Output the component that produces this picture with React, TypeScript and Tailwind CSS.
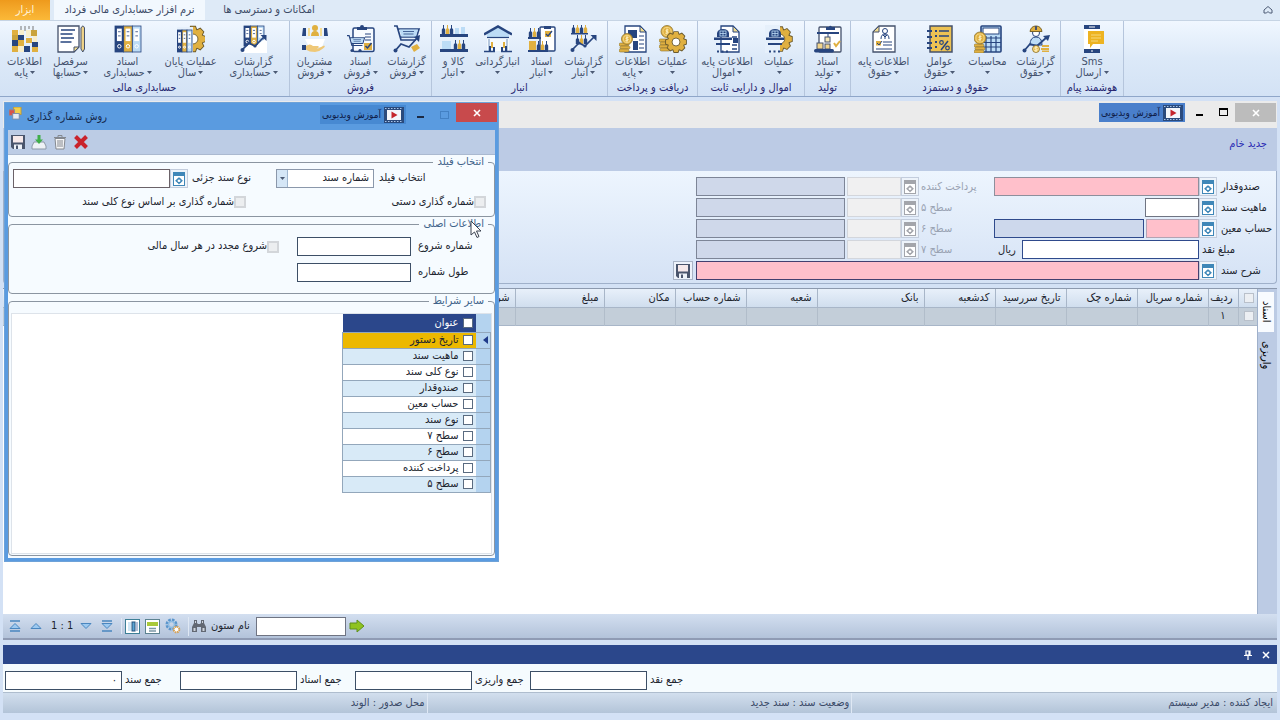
import type { ReactNode } from 'react';
import { clsx } from 'clsx';

const NAVY = '#27457f';
const GOLD = '#e0b040';
const SKY = '#bcdcf6';

// ---------------------------------------------------------------- ribbon icons

function Icon({ children }: { children: ReactNode }) {
  return (
    <svg viewBox="0 0 28 28" className="size-7 shrink-0" fill="none" aria-hidden>
      {children}
    </svg>
  );
}

// teeth and disc are drawn twice: outlined first, then filled, so only the silhouette keeps its stroke
function Gear({ cx, cy, r, hole = '#fff' }: { cx: number; cy: number; r: number; hole?: string }) {
  return (
    <g>
      {['#6b5a2c', 'none'].map((stroke) => (
        <g key={stroke} fill={GOLD} stroke={stroke} strokeWidth="1.800">
          {[0, 45, 90, 135].map((a) => (
            <path
              key={a}
              d={`M${cx - r * 0.26} ${cy + r * 0.7}L${cx - r * 0.17} ${cy + r * 0.95}H${cx + r * 0.17}L${cx + r * 0.26} ${cy + r * 0.7}V${cy - r * 0.7}L${cx + r * 0.17} ${cy - r * 0.95}H${cx - r * 0.17}L${cx - r * 0.26} ${cy - r * 0.7}z`}
              transform={`rotate(${a} ${cx} ${cy})`}
            />
          ))}
          <circle cx={cx} cy={cy} r={r * 0.74} />
        </g>
      ))}
      <circle cx={cx} cy={cy} r={r * 0.38} fill={hole} stroke="#6b5a2c" strokeWidth=".9" />
    </g>
  );
}

function Binders({ x, y, w, h }: { x: number; y: number; w: number; h: number }) {
  const c = w / 3;
  return (
    <g>
      {[NAVY, GOLD, SKY].map((fill, i) => (
        <g key={fill}>
          <rect x={x + i * c} y={y} width={c} height={h} fill={fill} stroke={NAVY} strokeWidth=".8" />
          <rect x={x + i * c + c * 0.22} y={y + h * 0.1} width={c * 0.56} height={h * 0.48} fill="#fff" />
          <path
            d={`M${x + i * c + c * 0.35} ${y + h * 0.22}h${c * 0.3}M${x + i * c + c * 0.35} ${y + h * 0.38}h${c * 0.3}`}
            stroke={NAVY}
            strokeWidth=".8"
          />
          <circle cx={x + i * c + c / 2} cy={y + h * 0.78} r={c * 0.2} stroke="#fff" strokeWidth="1" />
        </g>
      ))}
    </g>
  );
}

function Trend() {
  return (
    <g>
      <path d="M2 25l7-7 6 3L25 11" stroke={NAVY} strokeWidth="1.700" />
      <path d="M20.500 10h6v6z" fill={NAVY} />
      <circle cx="2.500" cy="25" r="2" fill={NAVY} />
      <circle cx="9" cy="18" r="1.600" fill={NAVY} />
      <circle cx="15" cy="21" r="1.600" fill={NAVY} />
    </g>
  );
}

function Bottles({ x, y, n = 5 }: { x: number; y: number; n?: number }) {
  return (
    <g>
      {Array.from({ length: n }, (_, i) => (
        <path
          key={i}
          d={`M${x + i * 4 + 1} ${y}h1v3l1.200 1.500v4.500h-3.400v-4.500l1.200-1.500z`}
          fill={i % 2 ? GOLD : NAVY}
        />
      ))}
    </g>
  );
}

function Page({ x = 5, y = 1, w = 20, h = 26 }: { x?: number; y?: number; w?: number; h?: number }) {
  return (
    <g>
      <path d={`M${x} ${y}h${w - 6}l6 6v${h - 6}h${-w}z`} fill="#fff" stroke={NAVY} strokeWidth="1.300" />
      <path d={`M${x + w - 6} ${y}v6h6z`} fill="#f1dc8f" stroke={NAVY} strokeWidth="1" />
    </g>
  );
}

function Clipboard({ x }: { x: number }) {
  return (
    <g>
      <rect x={x} y="3" width={27 - x} height="23.500" rx="1.500" fill="#f7fbff" stroke={NAVY} strokeWidth="1.500" />
      <path d={`M${x + 4} 5V2h3a2 2 0 0 1 4 0h3v3z`} fill={NAVY} />
    </g>
  );
}

function Coins({ x, y, n = 3 }: { x: number; y: number; n?: number }) {
  return (
    <g>
      {Array.from({ length: n }, (_, i) => (
        <rect key={i} x={x + (i % 2)} y={y + i * 3} width="10" height="3" rx="1.500" fill={GOLD} stroke="#8a7434" strokeWidth=".6" />
      ))}
    </g>
  );
}

function Coin({ cx, cy, r }: { cx: number; cy: number; r: number }) {
  return (
    <g>
      <circle cx={cx} cy={cy} r={r} fill={GOLD} stroke="#8a7434" strokeWidth=".8" />
      <circle cx={cx} cy={cy} r={r * 0.68} stroke="#f6dd8d" strokeWidth=".9" />
      <path d={`M${cx + 1.5} ${cy - 1.6}h-2q-1.500 1.500 .5 1.600q2.500 .2 .3 1.700h-2M${cx} ${cy - 3}v6`} stroke="#fff3c4" strokeWidth=".9" />
    </g>
  );
}

function Cart({ x, y, s = 1 }: { x: number; y: number; s?: number }) {
  return (
    <g transform={`translate(${x} ${y}) scale(${s})`}>
      <path d="M0 1h3l4 14h15M4.500 4H25l-2.500 8H6.500" stroke={NAVY} strokeWidth="1.700" />
      <path d="M5.500 4.500H24l-2 7H7.500z" fill={SKY} />
      <path d="M9 6.500h11M9.500 9h10" stroke={NAVY} strokeWidth=".8" />
    </g>
  );
}

function Helmet() {
  return (
    <g>
      <path d="M4 12V8q1-4 6-4t6 4v4z" fill={NAVY} />
      <path d="M1 12.500h18v2.500H1z" fill={NAVY} />
      <rect x="7" y="6" width="6" height="5" stroke={SKY} strokeWidth=".8" />
      <path d="M10 6v5M7 8.500h6" stroke={SKY} strokeWidth=".8" />
      <path d="M3 19h14" stroke={NAVY} strokeWidth="2" />
      <path d="M4 26.500h12" stroke={NAVY} strokeWidth="2" strokeDasharray="2 2.500" />
    </g>
  );
}

const icons: Record<string, ReactNode> = {
  base: (
    <>
      <path d="M10 1v4M14 1v5M18 1v3M22 1v4" stroke="#777" strokeWidth="1" />
      <path d="M1 5h6v5H1zM7 15h6v6H7zM15 13h6v5h-6zM21 21h6v6h-6zM1 21h6v6H1z" fill={GOLD} />
      <path d="M7 10h6v5H7zM1 15h6v6H1zM21 17h6v5h-6zM13 21h6v6h-6z" fill={NAVY} />
      <path d="M20 5h6v6h-6zM1 10h6v5H1z" fill="#c9a33c" />
      <path d="M8 5h5v5H8zM15 5h5v7h-5zM7 21h6v6H7zM22 11h4v6h-4z" fill="#f8eecb" />
    </>
  ),
  ledger: (
    <>
      <path d="M1 1h21v21l-5 5H1z" fill="#fff" stroke="#44516c" strokeWidth="1.300" />
      <path d="M17 27v-5h5z" fill="#f1dc8f" stroke="#44516c" />
      <path d="M4 5h14M3.500 9h12M4 13h13M3.500 17h11" stroke={NAVY} strokeWidth="1.500" />
      <path d="M24 3q2-4 3.500 0v21l-1.700 3-1.800-3z" fill="#eed287" stroke="#44516c" />
    </>
  ),
  binders: <Binders x={1} y={1} w={26} h={26} />,
  yearEnd: (
    <>
      <Gear cx={16} cy={14} r={13} />
      <rect x="-1" y="2" width="17" height="26" fill="#e6f0fb" />
      <Binders x={0} y={5} w={15} h={22} />
    </>
  ),
  accReports: (
    <>
      <Binders x={4} y={1} w={20} h={20} />
      <path d="M2 28l7-9 6 3 12-10v16z" fill="#fff" />
      <Trend />
    </>
  ),
  customers: (
    <>
      <circle cx="14" cy="3" r="3" fill={GOLD} />
      <path d="M10 11q0-5 4-5t4 5z" fill={GOLD} />
      <path d="M2 3h3v8H1zM23 3h3l1 8h-4z" fill={NAVY} />
      <path d="M7 3h2v8H7zM19 3h2v8h-2z" fill="#f4dc94" />
      <path d="M4 14h20l-3 8H8z" fill="#fff" />
      <path d="M5 21q4-3 7 0h5q2 1-1 2.500h-4 5l6-3q2 1-1 3-4 3.500-8 3.500-6 0-9-2.500z" fill="#efc877" />
      <path d="M1 20h4v5H1z" fill={NAVY} />
    </>
  ),
  salesDocs: (
    <>
      <Clipboard x={6} />
      <path d="M18 9h6M18 12h6M18 15h6" stroke={NAVY} />
      <Cart x={0} y={10} s={0.7} />
      <circle cx="5" cy="25.500" r="1.600" fill={NAVY} />
      <circle cx="13" cy="25.500" r="1.600" fill={NAVY} />
      <rect x="17" y="18" width="8" height="7" fill={GOLD} />
      <path d="M18.500 21l2 2 4-5" stroke={NAVY} strokeWidth="1.500" />
    </>
  ),
  salesReports: (
    <>
      <Cart x={1} y={0} s={1} />
      <path d="M2 26l6-7 8 3 9-10" stroke={NAVY} strokeWidth="1.800" />
      <path d="M21 12l6-2-1 7z" fill={NAVY} />
      <circle cx="2.500" cy="25.500" r="2" fill={NAVY} />
      <path d="M18 22l6-3 3 4-6 4z" fill={GOLD} />
    </>
  ),
  goods: (
    <>
      <Bottles x={2} y={0} n={3} />
      <path d="M15 3h4v6h-4zM21 2h4v7h-4z" fill={SKY} />
      <path d="M0 9h28v3H0zM0 24h28v3H0z" fill={NAVY} />
      <rect x="2" y="16" width="9" height="8" fill={SKY} />
      <Bottles x={14} y={15} n={3} />
    </>
  ),
  warehouse: (
    <>
      <path d="M3 12h22v14H3z" fill="#f5fafe" />
      <path d="M3 8l11-6 11 6v4H3z" fill={SKY} />
      <path d="M0 9.500L14 1.500l14 8" stroke={NAVY} strokeWidth="2.400" />
      <path d="M3 12.500h22" stroke={NAVY} strokeWidth="1.200" />
      <path d="M5 14v12M23 14v12" stroke="#9fb7d4" strokeWidth="1.500" />
      <path d="M7 17h2v6H7zM19 17h2v6h-2z" fill={GOLD} />
      <path d="M5 21h2v5H5zM9 22h2v4H9zM17 22h2v4h-2zM21 21h2v5h-2z" fill={NAVY} />
      <path d="M0 26.500h11M17 26.500h11" stroke={NAVY} strokeWidth="1.500" />
    </>
  ),
  stockDocs: (
    <>
      <rect x="12" y="2" width="15" height="24" rx="1" fill="#fff" stroke={NAVY} strokeWidth="1.400" />
      <path d="M16 4V1h7v3z" fill={NAVY} />
      <rect x="17" y="6" width="6" height="6" fill={GOLD} />
      <path d="M18 9l2 2 4-5" stroke={NAVY} strokeWidth="1.300" />
      <Bottles x={1} y={3} n={3} />
      <path d="M0 12h13v2H0zM0 25h20v2H0z" fill={NAVY} />
      <rect x="1" y="16" width="7" height="9" fill={GOLD} />
      <Bottles x={9} y={16} n={3} />
    </>
  ),
  stockReports: (
    <>
      <Bottles x={2} y={-1} n={4} />
      <path d="M1 8h17v1.500H1z" fill={NAVY} />
      <Bottles x={6} y={10} n={3} />
      <Trend />
    </>
  ),
  cashBase: (
    <>
      <Page x={6} w={21} />
      <path d="M9 5h9v8H9zM14 16h5v9h-5z" fill={NAVY} />
      <path d="M20 11h5M20 15h5M20 19h5M20 23h5" stroke={NAVY} strokeWidth="1.200" />
      <Coins x={0} y={18} />
      <Coin cx={8} cy={14} r={5.5} />
    </>
  ),
  cashOps: (
    <>
      <Coins x={0} y={14} n={4} />
      <Coin cx={8} cy={6.5} r={6} />
      <Gear cx={17} cy={17} r={10.500} />
    </>
  ),
  assetBase: (
    <>
      <Page x={8} w={18} />
      <path d="M19 12h5M19 20h5M19 24h5" stroke={NAVY} strokeWidth="1.300" />
      <Helmet />
      <rect x="20" y="13" width="5" height="5" fill={NAVY} />
    </>
  ),
  assetOps: (
    <>
      <Gear cx={15} cy={14} r={12.500} />
      <path d="M0 0h15v28H0z" fill="#e6f0fb" />
      <Helmet />
    </>
  ),
  production: (
    <>
      <rect x="5" y="2" width="22" height="25" rx="1" fill="#fff" stroke="#44516c" strokeWidth="1.300" />
      <path d="M12 5V2h3q1-2.500 3 0h3v3z" fill={NAVY} />
      <path d="M3 8h22" stroke={NAVY} strokeWidth="2" />
      <path d="M14 8v4" stroke={NAVY} />
      <rect x="11" y="12" width="5" height="5" fill="#f7e9b9" stroke="#44516c" />
      <rect x="3" y="18" width="6" height="6" fill="#f1d48c" stroke="#44516c" />
      <rect x="11" y="19" width="5" height="5" fill="#f1d48c" stroke="#44516c" />
      <rect x="0" y="24" width="20" height="3.500" rx="1.700" fill={NAVY} />
      <path d="M20 18l2 3 4-5" stroke={GOLD} strokeWidth="2" />
    </>
  ),
  payrollBase: (
    <>
      <path d="M9 1h16v26H3V7z" fill="#fff" stroke="#44516c" strokeWidth="1.300" />
      <path d="M9 1v6H3z" fill="#f1dc8f" stroke="#44516c" />
      <circle cx="15" cy="6" r="2.500" stroke={NAVY} />
      <path d="M11 14q0-5 4-5t4 5M15 9v5M13 10l2 2 2-2" stroke={NAVY} />
      <rect x="6" y="16" width="5" height="4.500" fill={GOLD} />
      <path d="M7 18l2 2 3-4" stroke={NAVY} />
      <path d="M13 17h9M13 20h9M6 24h16" stroke={NAVY} />
    </>
  ),
  factors: (
    <>
      <rect x="4" y="1" width="22" height="26" fill="#ecc254" stroke="#44516c" strokeWidth="1.500" />
      <path d="M1 6h5M1 12h5M1 18h5M1 23h5" stroke={NAVY} strokeWidth="2" />
      <path d="M9 6h2M9 11h2M9 17h2M9 22h2" stroke={NAVY} strokeWidth="2" />
      <path d="M13 6h10M13 11h10" stroke={NAVY} strokeWidth="1.400" />
      <path d="M15 25l7-9" stroke={NAVY} strokeWidth="1.500" />
      <circle cx="15.500" cy="17.500" r="1.800" stroke={NAVY} strokeWidth="1.200" />
      <circle cx="21.500" cy="23" r="1.800" stroke={NAVY} strokeWidth="1.200" />
    </>
  ),
  calc: (
    <>
      <rect x="7" y="1" width="20" height="26" rx="1" fill={SKY} stroke={NAVY} strokeWidth="1.600" />
      <rect x="9" y="3" width="16" height="6" fill="#fff" stroke={NAVY} />
      <path d="M7 13h20M7 17.500h20M7 22h20M12 11v16M17 11v16M22 11v16" stroke={NAVY} strokeWidth="1.200" />
      <Coins x={0} y={19} />
      <Coin cx={6} cy={13} r={6} />
    </>
  ),
  payrollReports: (
    <>
      <path d="M8 20q0-8 6-8t6 8z" fill={SKY} stroke={NAVY} />
      <circle cx="14" cy="8" r="3.500" fill="#fff" stroke={NAVY} />
      <path d="M8 6.500Q9 1 14 1t6 5.500z" fill={GOLD} stroke="#7a6428" />
      <path d="M13 1h2v4h-2z" fill="#44516c" />
      <path d="M2 26l6-7 7 2 10-9" stroke={NAVY} strokeWidth="1.800" />
      <path d="M21 11l7-1-2 6z" fill={NAVY} />
      <circle cx="2.500" cy="25.500" r="2" fill={NAVY} />
      <Coin cx={14} cy={24} r={3.500} />
      <path d="M20 20h7v2h-7zM19 23h8v2h-8zM20 25.500h7v1.500h-7z" fill={GOLD} />
    </>
  ),
  sms: (
    <>
      <rect x="6" y="0" width="16" height="28" rx="1.500" fill="#fff" />
      <path d="M6 0h16v4H6zM6 24h16v4H6z" fill={NAVY} />
      <path d="M10 6h16v13H15l-3 4v-4h-2z" fill="#edb321" />
      <path d="M13 10h10M13 13h10M13 16h7" stroke="#f8d97e" strokeWidth="1.200" />
      <path d="M11 2h6M13 26h2" stroke="#fff" />
    </>
  ),
};

// ---------------------------------------------------------------- ribbon

type RibbonItem = { icon: string; line1: string; line2?: string; width: string };
type RibbonGroup = { title: string; width: string; items: RibbonItem[] };

const groups: RibbonGroup[] = [
  {
    title: 'حسابداری مالی',
    width: 'w-[290px]',
    items: [
      { icon: 'base', line1: 'اطلاعات', line2: 'پایه', width: 'w-12' },
      { icon: 'ledger', line1: 'سرفصل', line2: 'حسابها', width: 'w-11' },
      { icon: 'binders', line1: 'اسناد', line2: 'حسابداری', width: 'w-[70px]' },
      { icon: 'yearEnd', line1: 'عملیات پایان', line2: 'سال', width: 'w-14' },
      { icon: 'accReports', line1: 'گزارشات', line2: 'حسابداری', width: 'w-[70px]' },
    ],
  },
  {
    title: 'فروش',
    width: 'w-[142px]',
    items: [
      { icon: 'customers', line1: 'مشتریان', line2: 'فروش', width: 'w-12' },
      { icon: 'salesDocs', line1: 'اسناد', line2: 'فروش', width: 'w-11' },
      { icon: 'salesReports', line1: 'گزارشات', line2: 'فروش', width: 'w-12' },
    ],
  },
  {
    title: 'انبار',
    width: 'w-44',
    items: [
      { icon: 'goods', line1: 'کالا و', line2: 'انبار', width: 'w-10' },
      { icon: 'warehouse', line1: 'انبارگردانی', width: 'w-12' },
      { icon: 'stockDocs', line1: 'اسناد', line2: 'انبار', width: 'w-10' },
      { icon: 'stockReports', line1: 'گزارشات', line2: 'انبار', width: 'w-11' },
    ],
  },
  {
    title: 'دریافت و پرداخت',
    width: 'w-[90px]',
    items: [
      { icon: 'cashBase', line1: 'اطلاعات', line2: 'پایه', width: 'w-10' },
      { icon: 'cashOps', line1: 'عملیات', width: 'w-10' },
    ],
  },
  {
    title: 'اموال و دارایی ثابت',
    width: 'w-[107px]',
    items: [
      { icon: 'assetBase', line1: 'اطلاعات پایه', line2: 'اموال', width: 'w-14' },
      { icon: 'assetOps', line1: 'عملیات', width: 'w-12' },
    ],
  },
  {
    title: 'تولید',
    width: 'w-[46px]',
    items: [{ icon: 'production', line1: 'اسناد', line2: 'تولید', width: 'w-11' }],
  },
  {
    title: 'حقوق و دستمزد',
    width: 'w-[210px]',
    items: [
      { icon: 'payrollBase', line1: 'اطلاعات پایه', line2: 'حقوق', width: 'w-16' },
      { icon: 'factors', line1: 'عوامل', line2: 'حقوق', width: 'w-12' },
      { icon: 'calc', line1: 'محاسبات', width: 'w-12' },
      { icon: 'payrollReports', line1: 'گزارشات', line2: 'حقوق', width: 'w-12' },
    ],
  },
  {
    title: 'هوشمند پیام',
    width: 'w-[63px]',
    items: [{ icon: 'sms', line1: 'Sms', line2: 'ارسال', width: 'w-12' }],
  },
];

function Caret() {
  return (
    <svg viewBox="0 0 5 3" className="h-[3px] w-[5px] shrink-0" aria-hidden>
      <path d="M0 0h5L2.500 3z" fill="#4c5a74" />
    </svg>
  );
}

function RibbonButton({ item }: { item: RibbonItem }) {
  return (
    <button className={clsx('flex flex-col items-center whitespace-nowrap', item.width)}>
      <Icon>{icons[item.icon]}</Icon>
      <span className="mt-[3px] block leading-[11px]">{item.line1}</span>
      <span className="flex h-[11px] items-center gap-0.5 leading-[11px]">
        {item.line2 && <span>{item.line2}</span>}
        <Caret />
      </span>
    </button>
  );
}

function Ribbon() {
  return (
    <header>
      <nav className="flex h-5 items-stretch bg-[#deeaf7] text-[#3c4a66]">
        <button className="w-[50px] bg-linear-to-b from-[#ee9a1c] to-[#fbb938] text-[#fff3d8]">ابزار</button>
        <button className="ml-1 w-[151px] bg-[#f2f8fe]">نرم افزار حسابداری مالی فرداد</button>
        <button className="w-[128px]">امکانات و دسترسی ها</button>
        <button aria-label="بستن نوار" className="mr-1 ml-auto w-4">
          <svg viewBox="0 0 10 10" className="mx-auto size-[10px]" fill="none" stroke="#4c5a74">
            <path d="M1 5l4-3.500L9 5v3H6.500L5 6.500 3.500 8H1z" />
          </svg>
        </button>
      </nav>
      <div className="flex h-[77px] border-y border-t-[#c6d4e4] border-b-[#8fa6c9] bg-linear-to-b from-[#f0f7ff] via-[#dce9f8] to-[#d3e2f5] text-[#44516c]">
        {groups.map((g) => (
          <section key={g.title} className={clsx('flex shrink-0 flex-col border-r border-[#b5c5dc] pt-1', g.width)}>
            <div className="flex justify-center">
              {g.items.map((item) => (
                <RibbonButton key={item.icon} item={item} />
              ))}
            </div>
            <h2 className="mt-[3px] text-center leading-[14px] whitespace-nowrap text-[#26266f]">{g.title}</h2>
          </section>
        ))}
      </div>
    </header>
  );
}

// ---------------------------------------------------------------- shared controls

function VideoHelp({ dim }: { dim?: boolean }) {
  return (
    <button
      dir="rtl"
      className={clsx(
        'flex h-[19px] items-center gap-[3px] px-0.5 text-[10px] text-[#10204a]',
        dim ? 'bg-[#4789d2]' : 'bg-[#4a7fcb]',
      )}
    >
      <svg viewBox="0 0 20 16" className="h-4 w-5" aria-hidden>
        <rect width="20" height="16" fill="#2a4a7c" />
        <path d="M1 1.500h18M1 14.500h18" stroke="#a9c4e8" strokeDasharray="1.500 1.500" />
        <rect x="3" y="3" width="14" height="10" fill="#f3f6fb" />
        <path d="M7.500 4.500l6 3.500-6 3.500z" fill="#c4252c" />
      </svg>
      <span className="whitespace-nowrap">آموزش ویدیویی</span>
    </button>
  );
}

function Lookup({ label, disabled }: { label: string; disabled?: boolean }) {
  const c = disabled ? '#a3a5ab' : '#3f87b8';
  return (
    <button
      type="button"
      aria-label={label}
      disabled={disabled}
      className="flex w-[18px] shrink-0 items-center justify-center self-stretch border border-[#c3cddd] bg-[#edf3fa]"
    >
      <svg viewBox="0 0 12 14" className="h-[14px] w-3" fill="none" aria-hidden>
        <rect x=".5" y=".5" width="11" height="13" fill="#fff" stroke={c} />
        <path d="M1 1h10v3H1z" fill={c} />
        <path d="M6 5l2 2.500H4zM6 12.500L4 10h4zM2 8.750l2-1.500v3zM10 8.750l-2-1.500v3z" fill={c} />
        <circle cx="6" cy="8.700" r="2" stroke={c} strokeWidth="1.200" />
      </svg>
    </button>
  );
}

function Floppy() {
  return (
    <svg viewBox="0 0 16 16" className="size-4" aria-hidden>
      <path d="M1 1h14v14H3l-2-2z" fill="#4a556c" />
      <path d="M3 2h10v6.500H3z" fill="#f6e9ea" />
      <path d="M4 10.500h8V15H4z" fill="#eef2f8" />
      <path d="M6 11.500h2V15H6z" fill="#4a556c" />
    </svg>
  );
}

const box = 'min-w-0 border outline-none px-1';

function Check({ label, id }: { label: string; id: string }) {
  return (
    <div dir="rtl" className="flex items-center whitespace-nowrap">
      <input id={id} type="checkbox" className="size-3 appearance-none border-2 border-[#d3d6da] bg-[#eceef0]" />
      <label htmlFor={id}>{label}</label>
    </div>
  );
}

function GridCheck({ label }: { label: string }) {
  return (
    <input
      type="checkbox"
      aria-label={label}
      className="block size-[10px] shrink-0 appearance-none border border-[#5a6b80] bg-white"
    />
  );
}

// ---------------------------------------------------------------- document form

const levels = ['پرداخت کننده', 'سطح ۵', 'سطح ۶', 'سطح ۷'];

function LevelCell({ label, id }: { label: string; id: string }) {
  return (
    <div className="flex w-[298px] shrink-0 text-[#9aa3b3]">
      <input aria-label={`${label} شرح`} readOnly className={clsx(box, 'w-[149px] border-[#7d8597] bg-[#cfd8ea]')} />
      <input id={id} disabled className={clsx(box, 'ml-0.5 w-[54px] border-[#d3d6dc] bg-[#f0f0f1]')} />
      <Lookup label={label} disabled />
      <label htmlFor={id} className="pl-0.5 leading-[19px] whitespace-nowrap">
        {label}
      </label>
    </div>
  );
}

function DocumentForm() {
  const label = 'w-[59px] shrink-0 pl-1 leading-[19px] whitespace-nowrap';
  return (
    <form className="flex flex-col gap-0.5 rounded-b border border-t-0 border-[#9fb0ca] bg-linear-to-b from-[#edf5fe] to-[#d5e2f5] pt-[6px] pb-[3px] text-[#20242e]">
      <div className="flex h-[19px] justify-end">
        <LevelCell label={levels[0]} id="lv0" />
        <input id="cashier" className={clsx(box, 'w-[205px] border-[#8d8f9c] bg-[#ffc0cb]')} />
        <Lookup label="صندوقدار" />
        <label htmlFor="cashier" className={label}>صندوقدار</label>
      </div>
      <div className="flex h-[19px] justify-end">
        <LevelCell label={levels[1]} id="lv1" />
        <div className="flex w-[205px] justify-end">
          <input id="nature" className={clsx(box, 'w-[54px] border-[#6f7482] bg-white')} />
        </div>
        <Lookup label="ماهیت سند" />
        <label htmlFor="nature" className={label}>ماهیت سند</label>
      </div>
      <div className="flex h-[19px] justify-end">
        <LevelCell label={levels[2]} id="lv2" />
        <div className="flex w-[205px] gap-0.5">
          <input aria-label="نام حساب" readOnly className={clsx(box, 'w-[150px] border-[#2f4a8c] bg-[#cdd8ec]')} />
          <input id="account" className={clsx(box, 'flex-1 border-[#b3a3b3] bg-[#ffc0cb]')} />
        </div>
        <Lookup label="حساب معین" />
        <label htmlFor="account" className={label}>حساب معین</label>
      </div>
      <div className="flex h-[19px] justify-end">
        <LevelCell label={levels[3]} id="lv3" />
        <div className="flex w-[205px] justify-between">
          <span className="pl-1 leading-[19px]">ریال</span>
          <input id="cash" className={clsx(box, 'w-[177px] border-[#2f4a8c] bg-white')} />
        </div>
        <label htmlFor="cash" className="w-[77px] shrink-0 pl-[3px] leading-[19px]">مبلغ نقد</label>
      </div>
      <div className="flex h-[19px] justify-end">
        <button type="button" aria-label="ذخیره" className="mr-[3px] flex w-5 items-center justify-center border border-[#a9b4c6] bg-[#edf2fa]">
          <Floppy />
        </button>
        <input id="desc" className={clsx(box, 'w-[503px] border-[#43406f] bg-[#ffc0cb]')} />
        <Lookup label="شرح سند" />
        <label htmlFor="desc" className={label}>شرح سند</label>
      </div>
    </form>
  );
}

// ---------------------------------------------------------------- cheque grid

const columns = [
  { title: 'شرح', width: '' },
  { title: 'مبلغ', width: 'w-[89px]' },
  { title: 'مکان', width: 'w-[71px]' },
  { title: 'شماره حساب', width: 'w-[71px]' },
  { title: 'شعبه', width: 'w-[71px]' },
  { title: 'بانک', width: 'w-[107px]' },
  { title: 'کدشعبه', width: 'w-[71px]' },
  { title: 'تاریخ سررسید', width: 'w-[71px]' },
  { title: 'شماره چک', width: 'w-[71px]' },
  { title: 'شماره سریال', width: 'w-[71px]' },
  { title: 'ردیف', width: 'w-[30px]' },
];

function ChequeGrid() {
  return (
    <div className="flex flex-1 border-t border-[#8c99ae] bg-[#bccbe4]">
      <div className="flex-1 bg-white">
        <table className="w-full table-fixed border-collapse text-[#20242e]">
          <thead>
            <tr className="h-[18px] bg-linear-to-b from-[#e8f0fa] to-[#d0deee]">
              {columns.map((c) => (
                <th
                  key={c.title}
                  className={clsx('border-r border-[#a8b6c8] p-0 pr-[5px] text-right leading-4 font-normal whitespace-nowrap', c.width)}
                >
                  {c.title}
                </th>
              ))}
              <th className="w-[19px] p-0 pl-[5px]">
                <input type="checkbox" aria-label="انتخاب همه" className="block size-[10px] appearance-none border border-[#b9c0ca] bg-[#eceff3]" />
              </th>
            </tr>
          </thead>
          <tbody>
            <tr className="h-[18px] border-y border-[#a8b6c8] bg-[#c3ced9]">
              {columns.map((c) => (
                <td key={c.title} className="border-r border-[#b1bdca] p-0 pr-3 text-right leading-4">
                  {c.title === 'ردیف' && '۱'}
                </td>
              ))}
              <td className="p-0 pl-[5px]">
                <input type="checkbox" aria-label="انتخاب ردیف" className="block size-[10px] appearance-none border border-[#b9c0ca] bg-[#eceff3]" />
              </td>
            </tr>
          </tbody>
        </table>
      </div>
      <div className="flex w-5 flex-col border-l border-[#9fb0ca] pr-[3px]">
        <button className="mt-[3px] flex h-10 items-center justify-center bg-[#f8fbff] [writing-mode:vertical-rl]">اسناد</button>
        <button className="flex h-[46px] items-center justify-center [writing-mode:vertical-rl]">واریزی</button>
      </div>
    </div>
  );
}

function NavTriangle({ up, bar }: { up?: boolean; bar?: boolean }) {
  return (
    <svg viewBox="0 0 12 12" className="size-3" fill="#9cc9f0" stroke="#4a86bf" aria-hidden>
      <path d={up ? 'M6 3.500L11 8.500H1z' : 'M6 8.500L1 3.500h10z'} />
      {bar && <path d="M1 1h10M1 11h10" strokeWidth="1.400" />}
    </svg>
  );
}

function Navigator() {
  return (
    <div className="flex h-[26px] items-center border-b-2 border-[#8f9bb4] bg-linear-to-b from-[#d3dff0] to-[#b3c3da] pl-[6px] text-[#20242e]">
      <div className="flex items-center gap-[9px]">
        <button aria-label="اول"><NavTriangle up bar /></button>
        <button aria-label="قبلی"><NavTriangle up /></button>
        <span className="w-5 text-center whitespace-nowrap">1 : 1</span>
        <button aria-label="بعدی"><NavTriangle /></button>
        <button aria-label="آخر"><NavTriangle bar /></button>
      </div>
      <div className="ml-2 flex items-center gap-[5px] border-l border-[#dfe8f4] pl-[3px]">
        <button aria-label="ستون ها">
          <svg viewBox="0 0 15 15" className="size-[15px]" fill="none">
            <rect x=".5" y=".5" width="14" height="14" fill="#fff" stroke="#3d7f96" />
            <path d="M3 3h3v9H3z" fill="#cfe6f5" />
            <rect x="7" y="3" width="3" height="9" fill="#5ba4d2" stroke="#23507c" />
            <path d="M12 3v9" stroke="#9ac" strokeWidth="1.500" />
          </svg>
        </button>
        <button aria-label="نمای کارت">
          <svg viewBox="0 0 15 15" className="size-[15px]" fill="none">
            <rect x=".5" y=".5" width="14" height="14" fill="#fff" stroke="#5c8290" />
            <path d="M2 3h11v4H2z" fill="#a9c93a" />
            <path d="M4 9.500h7M4 12h7" stroke="#7c98a6" strokeWidth="1.500" />
          </svg>
        </button>
        <button aria-label="تنظیمات">
          <svg viewBox="0 0 16 16" className="size-4" fill="none">
            <circle cx="6.500" cy="6.500" r="4.500" stroke="#5b96cc" strokeWidth="3" strokeDasharray="2.500 1" />
            <circle cx="6.500" cy="6.500" r="3" stroke="#8dbbe2" strokeWidth="1.500" />
            <circle cx="11.500" cy="11.500" r="2.800" fill="#fff" stroke="#d6a257" strokeWidth="2" strokeDasharray="1.500 .7" />
          </svg>
        </button>
      </div>
      <div className="ml-[7px] flex items-center border-l border-[#dfe8f4] pl-[3px]">
        <svg viewBox="0 0 14 14" className="mr-[5px] size-[14px]" aria-hidden>
          <path d="M2 1h3v3l1 1h2l1-1V1h3v3l2 4v5H9V8H5v5H0V8l2-4z" fill="#626873" />
          <path d="M1.500 9h2v3h-2zM10.500 9h2v3h-2zM3 2h1v2H3zM10 2h1v2h-1z" fill="#cdd3dc" />
        </svg>
        <label htmlFor="colname" className="w-[45px] whitespace-nowrap">نام ستون</label>
        <input id="colname" className={clsx(box, 'h-[19px] w-[90px] border-[#6f7482] bg-white')} />
        <button aria-label="برو" className="ml-[3px]">
          <svg viewBox="0 0 16 14" className="h-[14px] w-4">
            <path d="M1 4h7V1l7 6-7 6v-3H1z" fill="#8fc31f" stroke="#5f8f1c" />
          </svg>
        </button>
      </div>
    </div>
  );
}

// ---------------------------------------------------------------- numbering dialog

const conditions = [
  'تاریخ دستور',
  'ماهیت سند',
  'نوع کلی سند',
  'صندوقدار',
  'حساب معین',
  'نوع سند',
  'سطح ۷',
  'سطح ۶',
  'پرداخت کننده',
  'سطح ۵',
];

function Section({ title, className, children }: { title: string; className: string; children: ReactNode }) {
  return (
    <fieldset className={clsx('min-w-0 rounded border border-[#8b95a1]', className)}>
      <legend dir="rtl" className="mr-[6px] ml-auto h-[14px] px-1 leading-[14px] text-[#41638a]">
        {title}
      </legend>
      {children}
    </fieldset>
  );
}

function NumberingDialog() {
  return (
    <div
      role="dialog"
      aria-label="روش شماره گذاری"
      className="absolute top-[102px] left-1 flex h-[460px] w-[495px] flex-col border border-[#6ea2d8] bg-[#5a9be0] px-[3px] pb-[3px] text-[#20242e]"
    >
      <div className="flex h-[27px] shrink-0 items-start">
        <svg viewBox="0 0 14 14" className="mt-1 ml-px size-[13px]" aria-hidden>
          <rect x="5" y="0" width="8" height="8" fill="#f3cf4c" stroke="#b9973a" />
          <rect x="0" y="3" width="6" height="6" fill="#d9534a" stroke="#8c8c9c" />
          <rect x="4" y="7" width="7" height="6" fill="#e6eaf2" stroke="#7c8aa6" />
        </svg>
        <h1 dir="rtl" className="mt-[7px] ml-[5px] leading-[14px] text-[#14284c]">روش شماره گذاری</h1>
        <div className="mt-[2px] ml-auto">
          <VideoHelp dim />
        </div>
        <button aria-label="کوچک کردن" className="mt-[13px] ml-[11px] h-[2px] w-[7px] bg-[#1c2a44]" />
        <button aria-label="بزرگ کردن" className="mt-[8px] ml-4 h-2 w-[9px] border border-[#4381c4]" />
        <button aria-label="بستن" className="-mr-0.5 ml-[7px] flex h-[19px] w-[41px] items-center justify-center bg-[#c84a4c]">
          <svg viewBox="0 0 8 8" className="size-2" stroke="#fff" strokeWidth="1.600">
            <path d="M1 1l6 6M7 1L1 7" />
          </svg>
        </button>
      </div>

      <div className="flex min-h-0 flex-1 flex-col bg-[#f6fbff] pb-0.5">
        <div className="flex h-[25px] shrink-0 items-center gap-[5px] border-b border-[#aab9d0] bg-[#bccce5] pl-[2px]">
          <button aria-label="ذخیره"><Floppy /></button>
          <button aria-label="ذخیره و جدید">
            <svg viewBox="0 0 16 16" className="size-4">
              <path d="M3 8h10l2 4v3H1v-3z" fill="#eef2f6" stroke="#8c98a8" />
              <path d="M8 10L4 5.500h2.500V1h3v4.500H12z" fill="#3fae49" />
            </svg>
          </button>
          <button aria-label="حذف">
            <svg viewBox="0 0 16 16" className="size-4" fill="none" stroke="#84888f">
              <path d="M3 4.500h10l-1 10.500H4z" fill="#f4f5f7" />
              <path d="M2 3.500h12M6 3V1.500h4V3M6 6v7M8 6v7M10 6v7" />
            </svg>
          </button>
          <button aria-label="خروج">
            <svg viewBox="0 0 16 16" className="size-4" stroke="#c9232b" strokeWidth="4">
              <path d="M2.500 2.500l11 11M13.500 2.500l-11 11" />
            </svg>
          </button>
        </div>

        <Section title="انتخاب فیلد" className="h-[62px] shrink-0">
          <div className="flex h-[19px] items-center pl-1">
            <input id="subtype" className={clsx(box, 'h-[19px] w-[157px] border-[#6b6268] bg-white')} />
            <Lookup label="نوع سند جزئی" />
            <label htmlFor="subtype" className="ml-1 w-[84px] whitespace-nowrap">نوع سند جزئی</label>
            <div className="relative">
              <select id="field" dir="rtl" className="block h-[19px] w-[98px] appearance-none border border-[#8b98ab] bg-white pr-1">
                <option>شماره سند</option>
              </select>
              <span className="pointer-events-none absolute inset-y-px left-px flex w-[11px] items-center justify-center border-r border-[#9fb6cf] bg-[#d5e6f6]">
                <Caret />
              </span>
            </div>
            <label htmlFor="field" className="ml-[5px] whitespace-nowrap">انتخاب فیلد</label>
          </div>
          <div className="mt-[7px] flex h-[14px] items-center justify-between pr-2">
            <div className="flex w-[237px] justify-end">
              <Check id="bytype" label="شماره گذاری بر اساس نوع کلی سند" />
            </div>
            <Check id="manual" label="شماره گذاری دستی" />
          </div>
        </Section>

        <Section title="اطلاعات اصلی" className="h-[77px] shrink-0">
          <div className="mt-[6px] flex h-[19px] items-center">
            <div className="flex w-[270px] justify-end">
              <Check id="restart" label="شروع مجدد در هر سال مالی" />
            </div>
            <input id="start" className={clsx(box, 'ml-[18px] h-[19px] w-[114px] border-[#3d4f66] bg-white')} />
            <label htmlFor="start" className="ml-[7px] whitespace-nowrap">شماره شروع</label>
          </div>
          <div className="mt-[7px] flex h-[19px] items-center">
            <input id="length" className={clsx(box, 'ml-72 h-[19px] w-[114px] border-[#3d4f66] bg-white')} />
            <label htmlFor="length" className="ml-[7px] whitespace-nowrap">طول شماره</label>
          </div>
        </Section>

        <Section title="سایر شرایط" className="flex-1">
          <div className="mx-[2px] mt-[5px] flex h-[241px] justify-end border border-[#dde3ea] bg-white">
            <table className="h-[178px] w-[149px] border-collapse self-start">
              <thead>
                <tr className="h-[18px] bg-[#2b478b] text-white">
                  <th className="p-0 pr-[3px] font-normal">
                    <div dir="rtl" className="flex items-center gap-1 leading-[14px]">
                      <GridCheck label="انتخاب همه" />
                      عنوان
                    </div>
                  </th>
                  <td className="w-[15px] bg-[#b4d3ef] p-0" />
                </tr>
              </thead>
              <tbody>
                {conditions.map((c, i) => (
                  <tr key={c} className={clsx('h-4 border border-[#93a7bb]', i === 0 ? 'bg-[#ecb800]' : i % 2 ? 'bg-[#d8eaf7]' : 'bg-white')}>
                    <td className="p-0 pr-[3px]">
                      <div dir="rtl" className="flex items-center gap-1 leading-[14px]">
                        <GridCheck label={c} />
                        {c}
                      </div>
                    </td>
                    <td className="w-[15px] bg-[#b4d3ef] p-0">
                      {i === 0 && (
                        <svg viewBox="0 0 5 8" className="ml-[7px] h-2 w-[5px]" aria-hidden>
                          <path d="M5 0v8L0 4z" fill="#1f3a8a" />
                        </svg>
                      )}
                    </td>
                  </tr>
                ))}
              </tbody>
            </table>
          </div>
        </Section>
      </div>
    </div>
  );
}

// ---------------------------------------------------------------- totals and status

const totals = [
  { id: 'sumDoc', label: 'جمع سند', value: '۰' },
  { id: 'sumPapers', label: 'جمع اسناد', value: '' },
  { id: 'sumDeposit', label: 'جمع واریزی', value: '' },
  { id: 'sumCash', label: 'جمع نقد', value: '' },
];

function Totals() {
  return (
    <section className="mt-[5px] bg-[#f5fbfe] text-[#20242e]">
      <div className="flex h-[19px] items-center justify-end gap-[10px] bg-[#2b478b] pr-[7px]">
        <button aria-label="سنجاق">
          <svg viewBox="0 0 8 10" className="h-[10px] w-2" fill="none" stroke="#fff" strokeWidth="1.200">
            <path d="M2 1h4v4H2zM0 5.500h8M4 6v4M5 1v4" />
          </svg>
        </button>
        <button aria-label="بستن">
          <svg viewBox="0 0 8 8" className="size-2" stroke="#fff" strokeWidth="1.500">
            <path d="M1 1l6 6M7 1L1 7" />
          </svg>
        </button>
      </div>
      <div className="flex h-7 items-center pt-1 pl-[2px]">
        {totals.map((t) => (
          <div key={t.id} className="flex w-[175px] items-center">
            <input id={t.id} dir="rtl" defaultValue={t.value} className={clsx(box, 'h-[19px] w-[117px] border-[#3d4f66] bg-white')} />
            <label htmlFor={t.id} className="ml-[3px] whitespace-nowrap">{t.label}</label>
          </div>
        ))}
      </div>
    </section>
  );
}

export default function App() {
  return (
    <div className="relative flex min-h-screen flex-col overflow-hidden bg-[#d3e1f5] font-['DejaVu_Sans_Condensed','DejaVu_Sans',sans-serif] text-[11px]">
      <Ribbon />
      <main className="mx-[3px] mt-1 flex flex-1 flex-col">
        <div className="flex h-[27px] items-start justify-end bg-[#ebebeb] pt-[2px]">
          <VideoHelp />
          <button aria-label="کوچک کردن" className="mt-[11px] ml-[11px] h-[2px] w-[7px] bg-black" />
          <button aria-label="بزرگ کردن" className="mt-[5px] ml-4 h-2 w-[9px] border border-t-2 border-black" />
          <button aria-label="بستن" className="mr-px ml-[7px] flex h-[19px] w-[41px] items-center justify-center bg-[#bcbcbc]">
            <svg viewBox="0 0 8 8" className="size-2" stroke="#fff" strokeWidth="1.600">
              <path d="M1 1l6 6M7 1L1 7" />
            </svg>
          </button>
        </div>
        <div className="h-[43px] bg-[#bccbe5] pt-2 pr-[10px] text-right text-[#2b2bb4]">
          <a href="#new">جدید خام</a>
        </div>
        <DocumentForm />
        <div className="mt-[4px] flex flex-1 flex-col">
          <ChequeGrid />
          <Navigator />
        </div>
        <Totals />
      </main>
      <footer className="mx-[3px] mb-[7px] grid h-[21px] grid-cols-3 border-t border-[#aebdce] bg-linear-to-b from-[#d2dfee] to-[#b3c4d8] text-right leading-5 text-[#3a4a68]">
        <span dir="rtl" className="border-r border-[#dfe8f4] pr-[2px]">محل صدور : الوند</span>
        <span dir="rtl" className="border-r border-[#dfe8f4] pr-[2px]">وضعیت سند : سند جدید</span>
        <span dir="rtl" className="pr-[4px]">ایجاد کننده : مدیر سیستم</span>
      </footer>
      <NumberingDialog />
      <svg viewBox="0 0 12 19" className="pointer-events-none absolute top-[220px] left-[470px] h-[19px] w-3" aria-hidden>
        <path d="M1 1v14l3.500-3 2.500 5.500 2-1-2.500-5.500H11z" fill="#fff" stroke="#3b4250" />
      </svg>
    </div>
  );
}
